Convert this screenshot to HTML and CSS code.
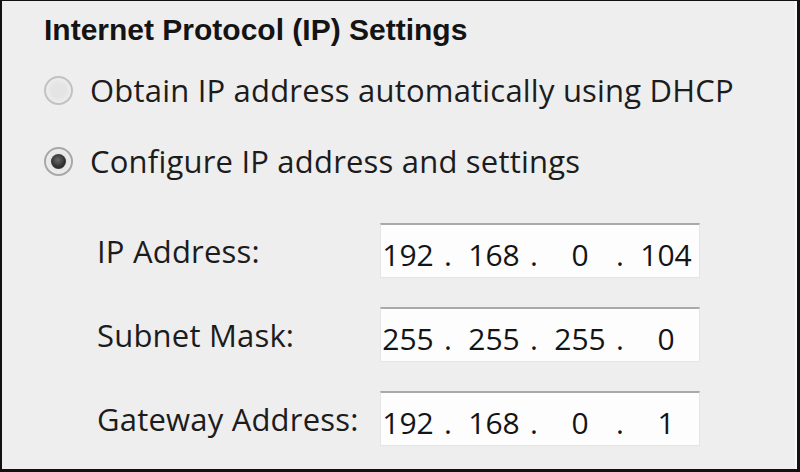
FILE: index.html
```html
<!DOCTYPE html>
<html lang="en">
  <head>
    <meta charset="UTF-8" />
    <title>Internet Protocol (IP) Settings</title>
    <link rel="stylesheet" href="styles.css">
  </head>
  <body>
    <!-- IP settings group -->
    <div class="frame">
      <div class="title">Internet Protocol (IP) Settings</div>

      <label class="option">
        <span class="radio"></span>
        <span class="option-text">Obtain IP address automatically using DHCP</span>
      </label>
      <label class="option option-second">
        <span class="radio checked"></span>
        <span class="option-text">Configure IP address and settings</span>
      </label>

      <div class="fields">
        <div class="field-label">IP Address:</div>
        <div class="ipbox">
          <span class="octet">192</span><span class="dot">.</span>
          <span class="octet">168</span><span class="dot">.</span>
          <span class="octet">0</span><span class="dot">.</span>
          <span class="octet">104</span>
        </div>

        <div class="field-label">Subnet Mask:</div>
        <div class="ipbox">
          <span class="octet">255</span><span class="dot">.</span>
          <span class="octet">255</span><span class="dot">.</span>
          <span class="octet">255</span><span class="dot">.</span>
          <span class="octet">0</span>
        </div>

        <div class="field-label">Gateway Address:</div>
        <div class="ipbox">
          <span class="octet">192</span><span class="dot">.</span>
          <span class="octet">168</span><span class="dot">.</span>
          <span class="octet">0</span><span class="dot">.</span>
          <span class="octet">1</span>
        </div>
      </div>
    </div>
  </body>
</html>
```

FILE: styles.css
```css
* {
  margin: 0;
  padding: 0;
  box-sizing: border-box;
}
body {
  width: 800px;
  height: 472px;
  background-color: #fff;
  font-family: "Open Sans", "Noto Sans", sans-serif;
  color: #1c1c1c;
}

/* outer frame */
.frame {
  width: 800px;
  height: 472px;
  border-style: solid;
  border-color: #111;
  border-width: 1px 3px 3px 2px;
  background-color: #eeeeee;
  padding: 9px 0 0 42px;
  box-shadow: inset -12px -5px 0 -10px #f8f8f8;
}

.title {
  font-family: "Liberation Sans", Arial, sans-serif;
  font-weight: bold;
  font-size: 30px;
  line-height: 40px;
  letter-spacing: 0;
  color: #141414;
}

/* radio rows */
.option {
  display: flex;
  align-items: center;
  height: 44px;
  margin-top: 18px;
  font-size: 31px;
  letter-spacing: 0.2px;
  line-height: 44px;
}
.option-second {
  margin-top: 27px;
}
.radio {
  width: 29px;
  height: 29px;
  border-radius: 50%;
  border: 2px solid #c2c2c2;
  background: radial-gradient(circle, #e4e4e4 40%, #f6f6f6 100%);
  margin-right: 17px;
  position: relative;
}
.radio.checked {
  border-color: #a8a8a8;
}
.radio.checked::after {
  content: "";
  position: absolute;
  left: 5px;
  top: 5px;
  width: 15px;
  height: 15px;
  border-radius: 50%;
  background: radial-gradient(circle at 45% 40%, #6a6a6a 0%, #2e2e2e 60%, #555 100%);
}

/* address fields */
.fields {
  display: grid;
  grid-template-columns: 283px 320px;
  grid-auto-rows: 55px;
  row-gap: 29px;
  margin: 40px 0 0 53px;
}
.field-label {
  display: flex;
  align-items: center;
  font-size: 31px;
  letter-spacing: 0.2px;
  line-height: 44px;
}
.ipbox {
  display: flex;
  height: 55px;
  background-color: #fdfdfd;
  border: 1px solid #e4e4e4;
  border-top: 2px solid #a9a9a9;
  padding-top: 8px;
  font-size: 30px;
  line-height: 44px;
  color: #141414;
}
.octet {
  width: 54px;
  text-align: center;
}
.dot {
  width: 32px;
  padding-left: 9px;
}
```
